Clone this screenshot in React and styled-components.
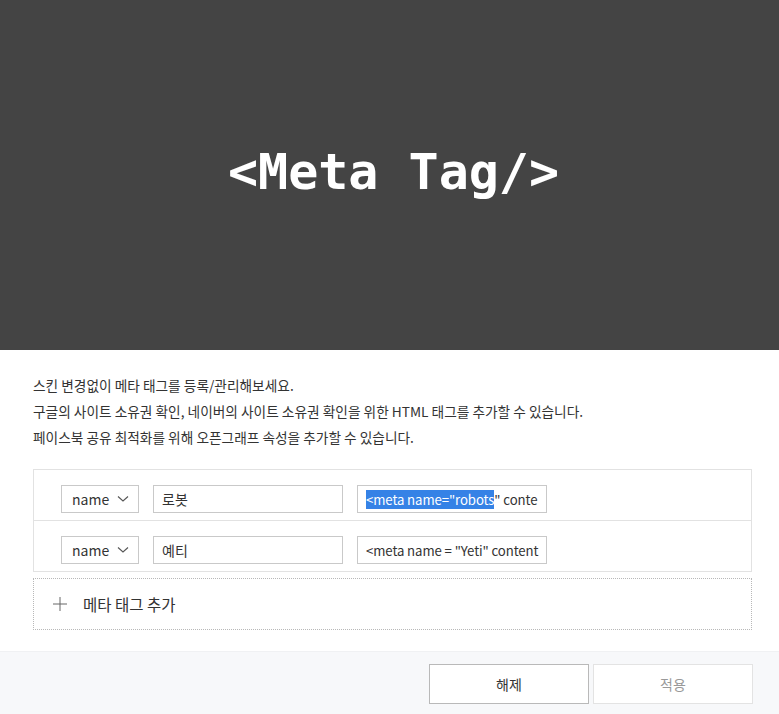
import React from "react";
import styled, { createGlobalStyle } from "styled-components";

const Global = createGlobalStyle`
  html, body { margin: 0; padding: 0; background: #fff; }
  body { font-family: "Noto Sans CJK KR", "Noto Sans", sans-serif; color: #333; }
  * { box-sizing: border-box; }
`;

const Page = styled.div`
  width: 779px;
  min-height: 714px;
  display: flex;
  flex-direction: column;
`;

const Hero = styled.div`
  height: 350px;
  background: #444444;
  display: flex;
  align-items: center;
  justify-content: center;
  padding-left: 8px;
`;

const HeroTitle = styled.h1`
  margin: 0;
  font-family: "DejaVu Sans Mono", "Liberation Mono", monospace;
  font-weight: bold;
  font-size: 50px;
  color: #ffffff;
  transform: translateY(-3px);
`;

const Body = styled.div`
  padding: 22px 27px 21px 33px;
  display: flex;
  flex-direction: column;
`;

const Desc = styled.div`
  font-size: 13.7px;
  line-height: 26px;
  color: #333;
  margin-bottom: 19px;
`;

const Table = styled.div`
  border: 1px solid #e2e2e2;
  display: flex;
  flex-direction: column;
`;

const Row = styled.div`
  height: 50px;
  display: flex;
  align-items: flex-start;
  gap: 14px;
  padding: 15px 0 0 27px;
  & + & { border-top: 1px solid #e2e2e2; height: 51px; }
`;

const Select = styled.div`
  width: 78px;
  height: 28px;
  border: 1px solid #c9c9c9;
  display: flex;
  align-items: center;
  justify-content: space-between;
  padding: 0 9px 0 10px;
  font-size: 14px;
  color: #333;
  background: #fff;
`;

const Field = styled.div`
  width: 190px;
  height: 28px;
  border: 1px solid #c9c9c9;
  display: flex;
  align-items: center;
  padding: 0 ${(p) => (p.$code ? "4px 0 8px" : "8px")};
  font-size: ${(p) => (p.$code ? "13.2px" : "14px")};
  letter-spacing: ${(p) => (p.$code ? "-0.1px" : "0")};
  color: #333;
  white-space: nowrap;
  overflow: hidden;
  background: #fff;
`;

const Selected = styled.span`
  background: #3582e6;
  color: #fff;
`;

const AddBox = styled.div`
  margin-top: 6px;
  height: 52px;
  border: 1px dotted #b8b8b8;
  display: flex;
  align-items: center;
  padding-left: 19px;
  gap: 16px;
  font-size: 15.5px;
  color: #333;
  cursor: pointer;
`;

const Footer = styled.div`
  flex: 1;
  background: #f7f8fa;
  border-top: 1px solid #f0f1f3;
  display: flex;
  justify-content: flex-end;
  align-items: flex-start;
  padding: 12px 26px 0 0;
  gap: 4px;
`;

const Button = styled.button`
  width: 160px;
  height: 40px;
  font-family: inherit;
  font-size: 14px;
  background: #fff;
  border: 1px solid ${(p) => (p.$primary ? "#b9b9b9" : "#e3e3e3")};
  color: ${(p) => (p.$primary ? "#333" : "#999")};
  cursor: pointer;
`;

const Chevron = () => (
  <svg width="12" height="8" viewBox="0 0 12 8">
    <path d="M1 1.5 L6 6 L11 1.5" fill="none" stroke="#555" strokeWidth="1.1" />
  </svg>
);

const Plus = () => (
  <svg width="14" height="14" viewBox="0 0 14 14">
    <path d="M7 0 V14 M0 7 H14" stroke="#666" strokeWidth="1" />
  </svg>
);

export default function App() {
  return (
    <>
      <Global />
      <Page>
        <Hero>
          <HeroTitle>&lt;Meta Tag/&gt;</HeroTitle>
        </Hero>
        <Body>
          <Desc>
            스킨 변경없이 메타 태그를 등록/관리해보세요.
            <br />
            구글의 사이트 소유권 확인, 네이버의 사이트 소유권 확인을 위한 HTML 태그를 추가할 수 있습니다.
            <br />
            페이스북 공유 최적화를 위해 오픈그래프 속성을 추가할 수 있습니다.
          </Desc>
          <Table>
            <Row>
              <Select>
                name <Chevron />
              </Select>
              <Field>로봇</Field>
              <Field $code>
                <Selected>&lt;meta name="robots</Selected>" conte
              </Field>
            </Row>
            <Row>
              <Select>
                name <Chevron />
              </Select>
              <Field>예티</Field>
              <Field $code>&lt;meta name = "Yeti" content</Field>
            </Row>
          </Table>
          <AddBox>
            <Plus />
            메타 태그 추가
          </AddBox>
        </Body>
        <Footer>
          <Button $primary>해제</Button>
          <Button>적용</Button>
        </Footer>
      </Page>
    </>
  );
}
